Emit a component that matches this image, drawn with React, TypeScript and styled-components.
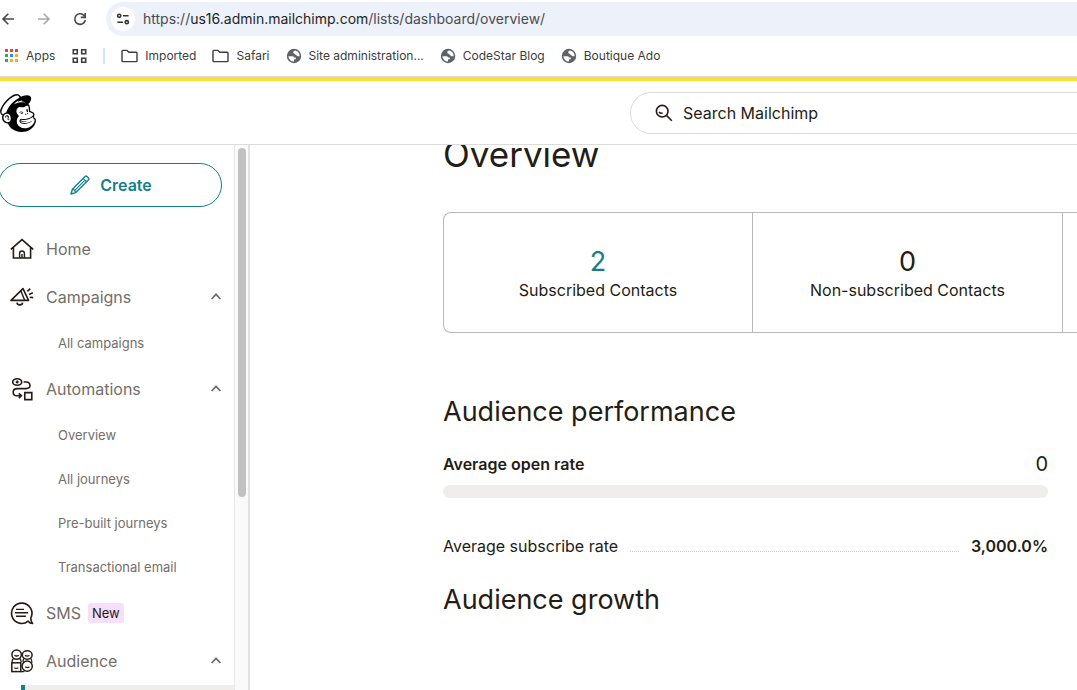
import React from 'react';
import styled, { createGlobalStyle, css } from 'styled-components';
import { SiMailchimp } from 'react-icons/si';

const ink = '#241c15';
const muted = '#736e69';
const teal = '#137f8a';
const line = '#dcdcdc';

const GlobalStyle = createGlobalStyle`
  *, *::before, *::after { box-sizing: border-box; }
  body {
    margin: 0;
    background: #fff;
    color: ${ink};
    font-family: Inter, "Liberation Sans", sans-serif;
    font-size: 16px;
    line-height: 24px;
  }
  a { color: inherit; text-decoration: none; }
  button { font: inherit; color: inherit; background: none; border: 0; padding: 0; cursor: pointer; }
  h1, h2, p, ul { margin: 0; padding: 0; }
  ul { list-style: none; }
  svg { display: block; flex: none; }
`;

const Page = styled.div`
  display: flex;
  flex-direction: column;
  height: 100vh;
  overflow: hidden;
`;

const Toolbar = styled.div`
  display: flex;
  align-items: center;
  height: 38px;
`;

const NavButtons = styled.div`
  display: flex;
  gap: 20px;
  width: 106px;
`;

const NavButton = styled.button<{ $dim?: boolean }>`
  width: 16px;
  height: 16px;
  color: ${p => (p.$dim ? '#a9a9a9' : '#474747')};
`;

const Omnibox = styled.div`
  display: flex;
  flex: 1;
  align-items: center;
  gap: 8px;
  height: 34px;
  padding-left: 5px;
  border-radius: 17px 0 0 17px;
  background: #edf1fa;
`;

const SiteInfo = styled.button`
  display: grid;
  place-items: center;
  width: 24px;
  height: 24px;
  border-radius: 50%;
  background: #fff;
`;

const Url = styled.p`
  font-size: 14px;
  line-height: 20px;
  color: #4a4b4f;
  white-space: nowrap;
`;

const Host = styled.span`
  color: #1f1f1f;
`;

const Bookmarks = styled.nav`
  display: flex;
  align-items: center;
  height: 39px;
  padding: 0 4px 2px;
  gap: 16px;
  border-bottom: 1px solid ${line};
  font-size: 12px;
  line-height: 16px;
  color: #3c3c3c;
`;

const Bookmark = styled.a`
  display: flex;
  align-items: center;
  gap: 7px;
  white-space: nowrap;
`;

const Divider = styled.span`
  width: 2px;
  height: 16px;
  background: #d3e3fd;
`;

const Header = styled.header`
  position: relative;
  z-index: 1;
  display: grid;
  grid-template-columns: 630px 1fr;
  align-items: center;
  height: 68px;
  flex: none;
  border-top: 4px solid #fcde37;
  border-bottom: 1px solid ${line};
  background: #fff;
`;

const LogoLink = styled.a`
  display: block;
  width: 38px;
  margin-left: -1px;
  color: #000;
`;

const Search = styled.label`
  display: flex;
  align-items: center;
  gap: 10px;
  height: 42px;
  padding-left: 24px;
  border: 1px solid ${line};
  border-right: 0;
  border-radius: 21px 0 0 21px;
`;

const SearchInput = styled.input`
  flex: 1;
  min-width: 0;
  border: 0;
  padding: 0;
  outline: 0;
  background: none;
  font: inherit;
  color: ${ink};
  &::placeholder { color: ${ink}; opacity: 1; }
`;

const Body = styled.div`
  display: flex;
  flex: 1;
  min-height: 0;
`;

const Sidebar = styled.aside`
  flex: none;
  width: 234px;
  padding-top: 18px;
  overflow: hidden;
`;

const CreateButton = styled.button`
  display: flex;
  align-items: center;
  justify-content: center;
  gap: 10px;
  width: 224px;
  height: 44px;
  margin: 0 0 18px -2px;
  padding-left: 2px;
  border: 1px solid ${teal};
  border-radius: 22px;
  color: ${teal};
  font-weight: 600;
`;

const rowBase = css`
  display: flex;
  align-items: center;
  width: 100%;
  color: ${muted};
  text-align: left;
`;

const rowMain = css`
  ${rowBase}
  gap: 12px;
  height: 48px;
  padding: 0 12px 0 10px;
`;

const MainLink = styled.a`${rowMain}`;
const MainToggle = styled.button`${rowMain}`;

const IconBox = styled.span`
  color: ${ink};
`;

const Caret = styled.span`
  margin-left: auto;
`;

const SubLink = styled.a`
  ${rowBase}
  height: 44px;
  padding-left: 58px;
  font-size: 13px;
  line-height: 20px;
`;

const ActiveLink = styled(SubLink)`
  width: auto;
  margin-left: 21px;
  padding-left: 33px;
  border-left: 4px solid ${teal};
  background: #efeeea;
`;

const Badge = styled.span`
  margin-left: -5px;
  padding: 0 4px;
  border-radius: 3px;
  background: #f7def9;
  color: ${ink};
  font-size: 13px;
  line-height: 20px;
`;

const ScrollTrack = styled.div`
  flex: none;
  width: 16px;
  padding: 3px 3px 0;
  border-left: 1px solid #e8e8e8;
  border-right: 2px solid #e2e2e2;
  background: #fafafa;
`;

const ScrollThumb = styled.div`
  width: 8px;
  height: 349px;
  border-radius: 4px;
  background: #c1c1c1;
`;

const Main = styled.main`
  flex: 1;
  min-width: 0;
  padding: 0 29px 0 193px;
`;

const Title = styled.h1`
  margin-top: -15px;
  font-size: 35px;
  line-height: 48px;
  font-weight: 400;
`;

const Stats = styled.ul`
  display: flex;
  margin: 34px -29px 0 0;
  border-top: 1px solid #b9b8b6;
  border-bottom: 1px solid #b9b8b6;
  border-left: 1px solid #b9b8b6;
  border-radius: 8px 0 0 8px;
  overflow: hidden;
`;

const Stat = styled.li`
  flex: 0 0 310px;
  height: 119px;
  padding-top: 33px;
  border-right: 1px solid #b9b8b6;
  text-align: center;
  &:first-child { flex-basis: 309px; }
`;

const StatValue = styled.p<{ $accent?: boolean }>`
  font-size: 27px;
  line-height: 32px;
  color: ${p => (p.$accent ? teal : ink)};
`;

const Section = styled.section`
  padding-top: 61px;
  & + & { padding-top: 24px; }
`;

const SectionTitle = styled.h2`
  font-size: 27px;
  line-height: 36px;
  font-weight: 400;
`;

const MetricRow = styled.div<{ $gap: number }>`
  display: flex;
  align-items: center;
  gap: 12px;
  margin-top: ${p => p.$gap}px;
`;

const MetricName = styled.span<{ $strong?: boolean }>`
  font-weight: ${p => (p.$strong ? 600 : 400)};
`;

const MetricValue = styled.span<{ $strong?: boolean }>`
  margin-left: auto;
  font-size: ${p => (p.$strong ? 16 : 20)}px;
  font-weight: ${p => (p.$strong ? 600 : 400)};
`;

const Dots = styled.span`
  flex: 1;
  height: 12px;
  border-bottom: 1px dotted #cfcdca;
`;

const Meter = styled.div`
  height: 13px;
  margin-top: 9px;
  border-radius: 7px;
  background: #efeeea;
`;

const stroke = { fill: 'none', stroke: 'currentColor', strokeWidth: 1.6 } as const;

const BackIcon = () => (
  <svg width="16" height="16" viewBox="0 0 16 16" {...stroke}><path d="M14 8H3M8.3 2.7 3 8l5.3 5.3" /></svg>
);
const ForwardIcon = () => (
  <svg width="16" height="16" viewBox="0 0 16 16" {...stroke}><path d="M2 8h11M7.7 2.7 13 8l-5.3 5.3" /></svg>
);
const ReloadIcon = () => (
  <svg width="16" height="16" viewBox="0 0 16 16" {...stroke}>
    <path d="M12.6 5.3A5.3 5.3 0 1 0 13.3 9" /><path d="M13.2 2v4.4H8.8" />
  </svg>
);
const TuneIcon = () => (
  <svg width="14" height="14" viewBox="0 0 14 14" fill="none" stroke="#333" strokeWidth="1.6">
    <circle cx="3.2" cy="3.8" r="1.6" /><path d="M7 3.8h5.6M1.4 10.2H7" /><circle cx="10.8" cy="10.2" r="1.6" />
  </svg>
);
const AppsIcon = () => {
  const colors = ['#ea4335', '#ea4335', '#ea4335', '#34a853', '#4285f4', '#fbab1e', '#34a853', '#fbab1e', '#fbab1e'];
  return (
    <svg width="15" height="15" viewBox="0 0 15 15">
      {colors.map((c, i) => <rect key={i} x={1 + (i % 3) * 5} y={Math.floor(i / 3) * 5} width="3" height="3" fill={c} />)}
    </svg>
  );
};
const TilesIcon = () => (
  <svg width="16" height="16" viewBox="0 0 16 16" {...stroke}>
    <path d="M2.3 1.8h4v4h-4zM10.7 1.8h4v4h-4zM2.3 10.2h4v4h-4zM10.7 10.2h4v4h-4z" />
  </svg>
);
const FolderIcon = () => (
  <svg width="17" height="14" viewBox="0 0 17 14" {...stroke} strokeWidth={1.4} strokeLinejoin="round">
    <path d="M1 2.2Q1 1.4 1.8 1.4H6l1.8 1.8h7.4q.8 0 .8.8v7.8q0 .8-.8.8H1.8q-.8 0-.8-.8z" />
  </svg>
);
const GlobeIcon = () => (
  <svg width="16" height="16" viewBox="0 0 16 16">
    <circle cx="8" cy="8" r="7.2" fill="#5f6368" />
    <path d="M9.2 2.6q-2 .2-2 1.8 0 1 1.2 1.2.4 1.4 1.8 1.4.6 1.2 1.8 1.2h1.6a5.6 5.6 0 0 0-4.4-5.6z" fill="#fff" />
    <path d="M2.4 8.2h3.8q1.8 0 1.8 1.4h1.8v1.6H8v2.4a5.6 5.6 0 0 1-5.6-5.4z" fill="#fff" />
  </svg>
);
const SearchIcon = () => (
  <svg width="18" height="18" viewBox="0 0 18 18" {...stroke} strokeWidth={1.6}>
    <circle cx="7.2" cy="7.2" r="5.8" /><path d="m11.4 11.4 5.4 5.4" /><path d="M4 8q1.6 2 3.6 1" strokeWidth="1.4" />
  </svg>
);
const PencilIcon = () => (
  <svg width="20" height="20" viewBox="0 0 20 20" {...stroke} strokeWidth={1.4} strokeLinejoin="round">
    <path d="M1 19l1.4-4.8L15.3 1.3q.8-.6 1.6.2l1.7 1.7q.7.8 0 1.6L5.8 17.6z" />
    <path d="M2.4 14.2l1.6.2.3 1.4 1.4.4.1 1.4M13.2 3.4l3.4 3.4" strokeWidth="1.1" />
    <path d="M4.3 15.8 15 5.2" strokeWidth="1.1" />
  </svg>
);
const HomeIcon = () => (
  <svg width="24" height="24" viewBox="0 0 24 24" {...stroke}>
    <path d="M.8 12.4 12 2.6l11.2 9.8M3.4 10.2V21h17.2V10.2" /><path d="M9.6 21v-4.6a2.4 2.4 0 0 1 4.8 0V21M12 17v4" strokeWidth="1.4" />
  </svg>
);
const CampaignIcon = () => (
  <svg width="24" height="24" viewBox="0 0 24 24" {...stroke} strokeLinejoin="round">
    <path d="M1 15.4 13 3.6l5.6 11.8z" /><path d="M10.8 5.8l4 9.6" strokeWidth="1.4" />
    <path d="M7 17.6q.2 2.3 2.8 2.3t2.8-2.3M17.4 6.4l2.8-2.8M19 9.4l3.8-1.6M19.8 12.2l3.4.4" />
  </svg>
);
const AutomationIcon = () => (
  <svg width="24" height="24" viewBox="0 0 24 24" {...stroke}>
    <ellipse cx="7.2" cy="5" rx="4.5" ry="3.3" /><circle cx="7.2" cy="5" r="1.1" fill="currentColor" strokeWidth="1" />
    <path d="M13.6 5h3a3.4 3.4 0 0 1 3.4 3.6q0 3-3.8 3H7.4q-4.2 0-4.2 3.6 0 3.6 3.6 3.6H11M8.8 16.4l2.6 2.4-2.6 2.4M14.8 15.6h7v7h-7z" />
  </svg>
);
const SmsIcon = () => (
  <svg width="24" height="24" viewBox="0 0 24 24" {...stroke} strokeLinejoin="round">
    <path d="M18.2 20.2A10.2 10.2 0 1 1 20.8 17q-.2 3 1.8 5.4-2.8 0-4.4-2.2z" />
    <path d="M6 8.4h8M5 11.8h13M6 15.2h10" strokeWidth="1.4" />
  </svg>
);
const AudienceIcon = () => (
  <svg width="24" height="24" viewBox="0 0 24 24" {...stroke} strokeWidth={1.5}>
    <circle cx="6.6" cy="5.6" r="4.7" /><ellipse cx="17.2" cy="6" rx="4.9" ry="4.2" /><rect x="1.8" y="13.8" width="9" height="8.8" /><circle cx="17.2" cy="17.2" r="5.1" />
    <path d="M2 13.6q-.2-2.8 1.6-4.4M9.6 9.2q1.4 1.4 1.6 3.8M13.2 13q-.4-2 .8-3.6M21.8 14q.4-2.6-1.2-4.8M10.8 22.6h3.6" strokeWidth="1.3" />
    <path d="M4.4 6.2q2.2 1.6 4.4 0M15 6.4q2.2 1.4 4.4 0M4.2 18.8q2.1 1.2 4.2 0M15.2 17.8q2.2 1.6 4.2 0" strokeWidth="1.3" />
  </svg>
);
const CaretIcon = () => (
  <svg width="12" height="10" viewBox="0 0 12 10" {...stroke} strokeWidth={1.8}><path d="m1.6 7 4.4-4.6L10.4 7" /></svg>
);

const Group = ({ icon, label }: { icon: React.ReactNode; label: string }) => (
  <MainToggle type="button" aria-expanded="true">
    <IconBox>{icon}</IconBox>
    {label}
    <Caret><CaretIcon /></Caret>
  </MainToggle>
);

export default function App() {
  return (
    <>
      <GlobalStyle />
      <Page>
        <Toolbar>
          <NavButtons>
            <NavButton aria-label="Back"><BackIcon /></NavButton>
            <NavButton aria-label="Forward" $dim><ForwardIcon /></NavButton>
            <NavButton aria-label="Reload"><ReloadIcon /></NavButton>
          </NavButtons>
          <Omnibox>
            <SiteInfo aria-label="Site information"><TuneIcon /></SiteInfo>
            <Url>https://<Host>us16.admin.mailchimp.com</Host>/lists/dashboard/overview/</Url>
          </Omnibox>
        </Toolbar>
        <Bookmarks aria-label="Bookmarks">
          <Bookmark href="#apps"><AppsIcon />Apps</Bookmark>
          <Bookmark href="#tabs" aria-label="Tab groups"><TilesIcon /></Bookmark>
          <Divider />
          <Bookmark href="#imported"><FolderIcon />Imported</Bookmark>
          <Bookmark href="#safari"><FolderIcon />Safari</Bookmark>
          <Bookmark href="#site"><GlobeIcon />Site administration...</Bookmark>
          <Bookmark href="#codestar"><GlobeIcon />CodeStar Blog</Bookmark>
          <Bookmark href="#boutique"><GlobeIcon />Boutique Ado</Bookmark>
        </Bookmarks>
        <Header>
          <LogoLink href="#home" aria-label="Mailchimp"><SiMailchimp size={38} /></LogoLink>
          <Search>
            <SearchIcon />
            <SearchInput type="search" placeholder="Search Mailchimp" aria-label="Search Mailchimp" />
          </Search>
        </Header>
        <Body>
          <Sidebar>
            <CreateButton type="button"><PencilIcon />Create</CreateButton>
            <nav aria-label="Main">
              <MainLink href="#home"><IconBox><HomeIcon /></IconBox>Home</MainLink>
              <Group icon={<CampaignIcon />} label="Campaigns" />
              <SubLink href="#campaigns">All campaigns</SubLink>
              <Group icon={<AutomationIcon />} label="Automations" />
              <SubLink href="#overview">Overview</SubLink>
              <SubLink href="#journeys">All journeys</SubLink>
              <SubLink href="#prebuilt">Pre-built journeys</SubLink>
              <SubLink href="#transactional">Transactional email</SubLink>
              <MainLink href="#sms"><IconBox><SmsIcon /></IconBox>SMS<Badge>New</Badge></MainLink>
              <Group icon={<AudienceIcon />} label="Audience" />
              <ActiveLink href="#dashboard" aria-current="page" />
            </nav>
          </Sidebar>
          <ScrollTrack><ScrollThumb /></ScrollTrack>
          <Main>
            <Title>Overview</Title>
            <Stats>
              <Stat><StatValue $accent>2</StatValue>Subscribed Contacts</Stat>
              <Stat><StatValue>0</StatValue>Non-subscribed Contacts</Stat>
            </Stats>
            <Section>
              <SectionTitle>Audience performance</SectionTitle>
              <MetricRow $gap={22}>
                <MetricName $strong>Average open rate</MetricName>
                <MetricValue>0</MetricValue>
              </MetricRow>
              <Meter />
              <MetricRow $gap={36}>
                <MetricName>Average subscribe rate</MetricName>
                <Dots />
                <MetricValue $strong>3,000.0%</MetricValue>
              </MetricRow>
            </Section>
            <Section>
              <SectionTitle>Audience growth</SectionTitle>
            </Section>
          </Main>
        </Body>
      </Page>
    </>
  );
}
